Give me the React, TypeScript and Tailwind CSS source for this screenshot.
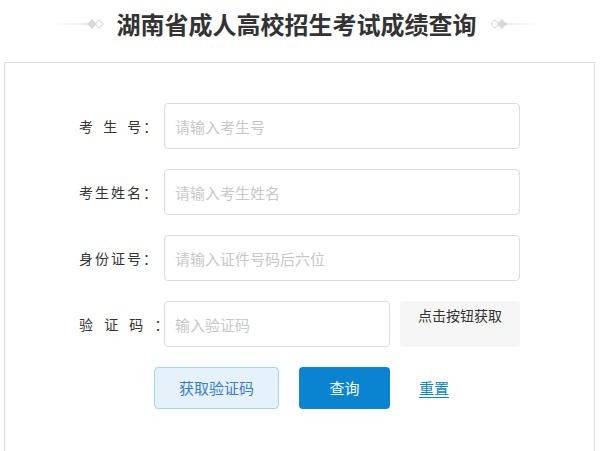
import React from 'react';

const font = { fontFamily: '"Noto Sans CJK SC", "Noto Sans", sans-serif' };

function Ornament({ flip }: { flip?: boolean }) {
  return (
    <svg width="52" height="12" viewBox="0 0 52 12" className={flip ? '-scale-x-100' : ''}>
      <defs>
        <linearGradient id={flip ? 'lg2' : 'lg1'} x1="0" x2="1" y1="0" y2="0">
          <stop offset="0" stopColor="#e6e6e6" stopOpacity="0" />
          <stop offset="1" stopColor="#cfcfcf" />
        </linearGradient>
      </defs>
      <rect x="0" y="5.5" width="37" height="1" fill={`url(#${flip ? 'lg2' : 'lg1'})`} />
      <path d="M40 1 L45 6 L40 11 L35 6 Z" fill="#d9d9d9" />
      <path d="M47 1.8 L51 6 L47 10.2 L43 6 Z" fill="none" stroke="#cfcfcf" strokeWidth="1" />
    </svg>
  );
}

function Field({ label, placeholder, spacing }: { label: string; placeholder: string; spacing?: string }) {
  return (
    <div className="flex items-center pl-[74px]">
      <span className={`w-[85px] text-[14px] text-[#333] tracking-[2px] whitespace-pre ${spacing ?? ''}`}>{label}</span>
      <input
        type="text"
        placeholder={placeholder}
        className="h-[46px] w-[356px] rounded-[4px] border border-[#dcdcdc] bg-white px-[10px] text-[15px] text-[#333] outline-none placeholder:text-[#c8c8c8]"
      />
    </div>
  );
}

export default function App() {
  return (
    <div className="min-h-[451px] bg-white" style={font}>
      {/* Title */}
      <div className="flex h-[48px] items-center justify-center pr-[7px]">
        <Ornament />
        <h1 className="mx-[13px] text-[24px] font-bold text-[#333] leading-none">湖南省成人高校招生考试成绩查询</h1>
        <Ornament flip />
      </div>

      {/* Form card */}
      <div className="ml-[4px] mt-[14px] h-[400px] w-[591px] border border-[#dddddd] border-b-0 pt-[40px]">
        <div className="flex flex-col gap-[20px]">
          <Field label={'考 生 号：'} placeholder="请输入考生号" spacing="[word-spacing:3px]" />
          <Field label="考生姓名：" placeholder="请输入考生姓名" />
          <Field label="身份证号：" placeholder="请输入证件号码后六位" />
          <div className="flex items-center pl-[74px]">
            <span className="w-[85px] text-[14px] text-[#333] tracking-[2px] whitespace-pre [word-spacing:4px]">{'验 证 码 ：'}</span>
            <input
              type="text"
              placeholder="输入验证码"
              className="h-[46px] w-[226px] rounded-[4px] border border-[#dcdcdc] bg-white px-[10px] text-[15px] text-[#333] outline-none placeholder:text-[#c8c8c8]"
            />
            <button className="ml-[10px] h-[46px] w-[120px] self-start rounded-[4px] bg-[#f6f6f6] pt-[4px] text-[14px] leading-[20px] text-[#333] flex justify-center items-start">
              点击按钮获取
            </button>
          </div>
        </div>

        {/* Actions */}
        <div className="mt-[20px] flex items-center pl-[149px]">
          <button className="h-[42px] w-[125px] rounded-[4px] border border-[#a6d3f0] bg-[#e5f2fb] text-[15px] text-[#3a7dcc]">
            获取验证码
          </button>
          <button className="ml-[20px] h-[42px] w-[91px] rounded-[4px] bg-[#0a84d0] text-[15px] text-white">
            查询
          </button>
          <a href="#" className="ml-[29px] text-[15px] text-[#0a84d0] underline underline-offset-[3px]">
            重置
          </a>
        </div>
      </div>
    </div>
  );
}
